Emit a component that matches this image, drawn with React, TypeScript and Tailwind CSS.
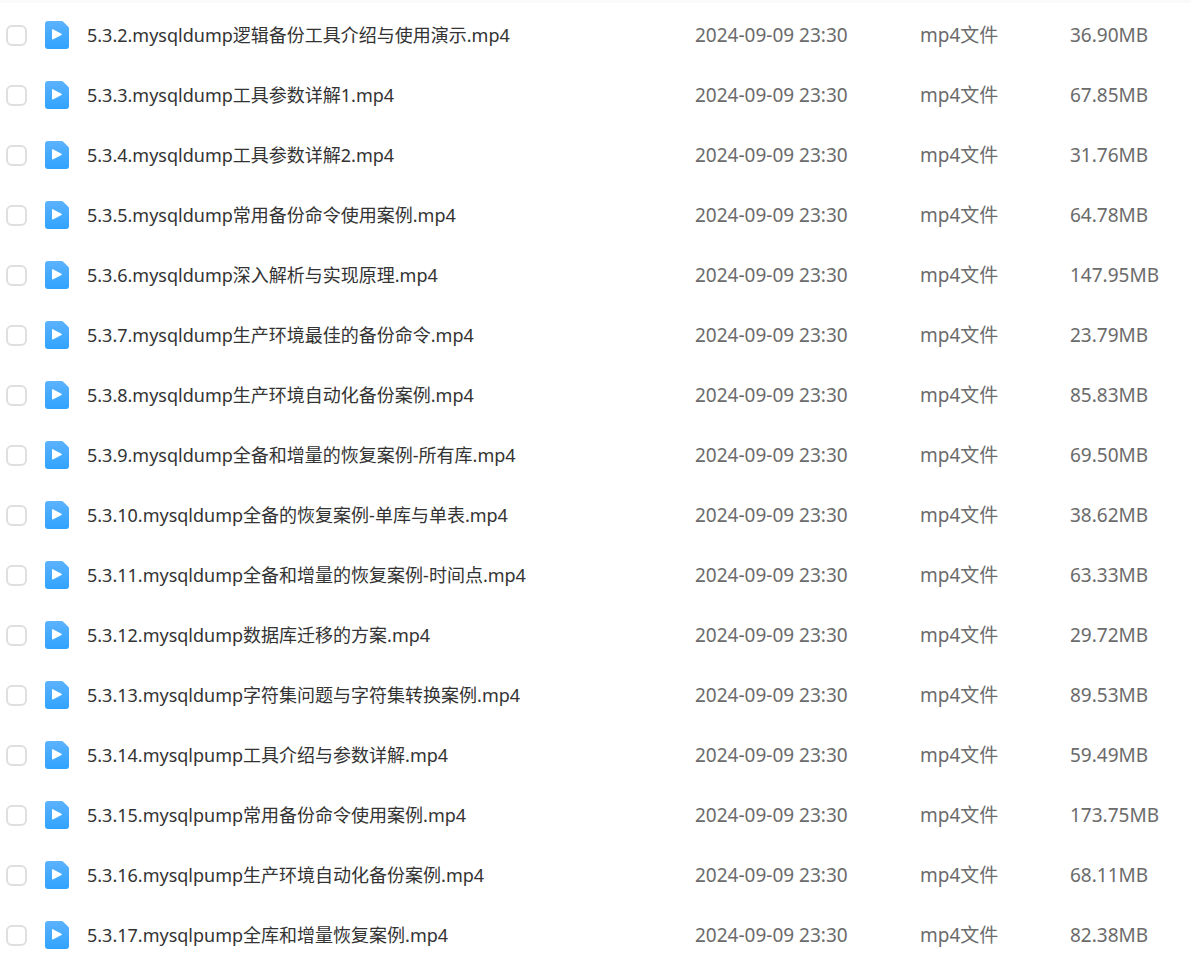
import React from 'react';

interface VideoFile {
  name: string;
  size: string;
}

const files: VideoFile[] = [
  { name: '5.3.2.mysqldump逻辑备份工具介绍与使用演示.mp4', size: '36.90MB' },
  { name: '5.3.3.mysqldump工具参数详解1.mp4', size: '67.85MB' },
  { name: '5.3.4.mysqldump工具参数详解2.mp4', size: '31.76MB' },
  { name: '5.3.5.mysqldump常用备份命令使用案例.mp4', size: '64.78MB' },
  { name: '5.3.6.mysqldump深入解析与实现原理.mp4', size: '147.95MB' },
  { name: '5.3.7.mysqldump生产环境最佳的备份命令.mp4', size: '23.79MB' },
  { name: '5.3.8.mysqldump生产环境自动化备份案例.mp4', size: '85.83MB' },
  { name: '5.3.9.mysqldump全备和增量的恢复案例-所有库.mp4', size: '69.50MB' },
  { name: '5.3.10.mysqldump全备的恢复案例-单库与单表.mp4', size: '38.62MB' },
  { name: '5.3.11.mysqldump全备和增量的恢复案例-时间点.mp4', size: '63.33MB' },
  { name: '5.3.12.mysqldump数据库迁移的方案.mp4', size: '29.72MB' },
  { name: '5.3.13.mysqldump字符集问题与字符集转换案例.mp4', size: '89.53MB' },
  { name: '5.3.14.mysqlpump工具介绍与参数详解.mp4', size: '59.49MB' },
  { name: '5.3.15.mysqlpump常用备份命令使用案例.mp4', size: '173.75MB' },
  { name: '5.3.16.mysqlpump生产环境自动化备份案例.mp4', size: '68.11MB' },
  { name: '5.3.17.mysqlpump全库和增量恢复案例.mp4', size: '82.38MB' },
];

function VideoIcon() {
  return (
    <svg width="24" height="28" viewBox="0 0 24 28" className="shrink-0" aria-hidden="true">
      <defs>
        <linearGradient id="video-icon" x1="0" y1="0" x2="0" y2="1">
          <stop offset="0" stopColor="#5cb2fd" />
          <stop offset="1" stopColor="#30a3ff" />
        </linearGradient>
      </defs>
      <path
        d="M3 0H16.500Q17.500 0 18.200.7L23.300 5.800Q24 6.500 24 7.500V25a3 3 0 0 1-3 3H3a3 3 0 0 1-3-3V3a3 3 0 0 1 3-3Z"
        fill="url(#video-icon)"
      />
      <path d="M7 8.800v9q0 1 .9.600l8.600-4.500q.8-.6 0-1.200L7.900 8.200Q7 7.800 7 8.800Z" fill="#fff" />
    </svg>
  );
}

export default function App() {
  return (
    <main className="bg-white border-t-3 border-[#fafafa] pt-0.5 font-['Noto_Sans','Noto_Sans_CJK_SC',sans-serif] text-[19px] text-[#6b6b6b]">
      <table className="w-full table-fixed">
        <colgroup>
          <col />
          <col className="w-[225px]" />
          <col className="w-[150px]" />
          <col className="w-[121px]" />
        </colgroup>
        <tbody>
          {files.map((file, i) => (
            <tr key={file.name} className="h-[60px]">
              <td>
                <div className="flex items-center pl-1.5">
                  <input
                    id={`file-${i}`}
                    type="checkbox"
                    className="size-[21px] shrink-0 appearance-none rounded-md border-2 border-[#dfdfdf] bg-white checked:bg-[#45a9fc]"
                  />
                  <label htmlFor={`file-${i}`} className="flex items-center gap-[18px] pl-[18px] text-lg whitespace-nowrap text-[#333]">
                    <VideoIcon />
                    {file.name}
                  </label>
                </div>
              </td>
              <td>2024-09-09 23:30</td>
              <td>mp4文件</td>
              <td>{file.size}</td>
            </tr>
          ))}
        </tbody>
      </table>
    </main>
  );
}
